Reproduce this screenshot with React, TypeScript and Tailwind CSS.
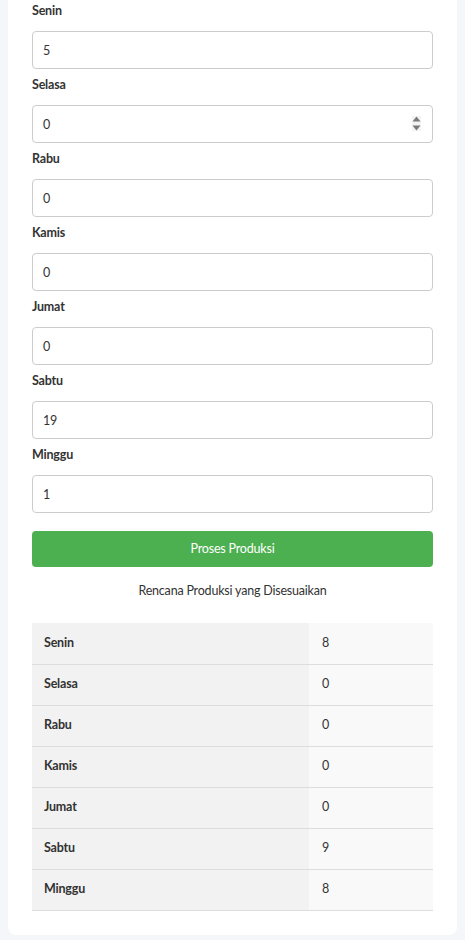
const days = [
  { name: "Senin", input: "5", plan: 8 },
  { name: "Selasa", input: "0", plan: 0 },
  { name: "Rabu", input: "0", plan: 0 },
  { name: "Kamis", input: "0", plan: 0 },
  { name: "Jumat", input: "0", plan: 0 },
  { name: "Sabtu", input: "19", plan: 9 },
  { name: "Minggu", input: "1", plan: 8 },
];

const Spinner = () => (
  <div className="absolute right-[12px] top-[11px] flex h-[15px] w-[9px] flex-col items-center justify-between bg-[#f3f3f3]">
    <svg width="9" height="6" viewBox="0 0 9 6">
      <path d="M4.5 0.5 L8.5 5.5 L0.5 5.5 Z" fill="#7a7a7a" />
    </svg>
    <svg width="9" height="6" viewBox="0 0 9 6">
      <path d="M0.5 0.5 L8.5 0.5 L4.5 5.5 Z" fill="#7a7a7a" />
    </svg>
  </div>
);

export default function App() {
  return (
    <div
      className="min-h-[940px] bg-[#f4f6fa] px-2 pb-[7px] text-[12.5px] tracking-[-0.2px] text-[#333]"
      style={{ fontFamily: 'Lato, "Open Sans", Arial, sans-serif' }}
    >
      <div className="rounded-b-lg bg-white px-6 pt-px pb-6">
        {/* Form */}
        {days.map((d) => (
          <div key={d.name} className="mb-[6px]">
            <label className="mb-[10px] block text-[12.5px] font-bold leading-5 text-[#333]">
              {d.name}
            </label>
            <div className="relative">
              <input
                type="text"
                readOnly
                value={d.input}
                className="block h-[38px] w-full rounded-[4px] border border-[#ccc] bg-white px-[10px] text-[12.5px] tracking-[-0.2px] text-[#333] outline-none"
              />
              {d.name === "Selasa" && <Spinner />}
            </div>
          </div>
        ))}

        <button
          type="button"
          className="mt-[18px] block h-[36px] w-full rounded-[4px] bg-[#4caf50] text-[12.5px] tracking-[-0.2px] text-white"
        >
          Proses Produksi
        </button>

        <h3 className="mt-[14px] text-center text-[12.5px] leading-5 font-normal text-[#333]">
          Rencana Produksi yang Disesuaikan
        </h3>

        {/* Result table */}
        <table className="mt-[22px] w-full border-collapse">
          <tbody>
            {days.map((d) => (
              <tr key={d.name} className="border-b border-[#ddd]">
                <th className="h-[41px] w-[277px] bg-[#f2f2f2] px-3 text-left text-[12.5px] font-bold text-[#333]">
                  {d.name}
                </th>
                <td className="h-[41px] bg-[#f9f9f9] px-[13px] text-left text-[12.5px] text-[#333]">
                  {d.plan}
                </td>
              </tr>
            ))}
          </tbody>
        </table>
      </div>
    </div>
  );
}
